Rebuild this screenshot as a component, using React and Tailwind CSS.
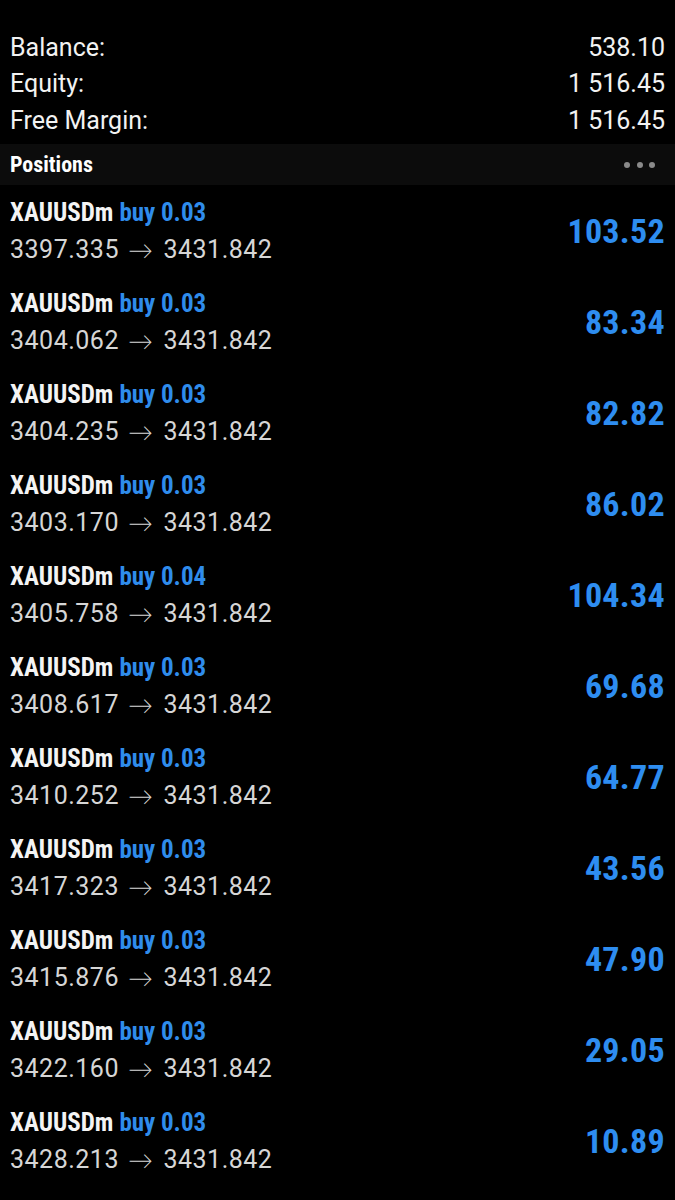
import React from "react";

const rows = [
  ["0.03", "3397.335", "103.52"],
  ["0.03", "3404.062", "83.34"],
  ["0.03", "3404.235", "82.82"],
  ["0.03", "3403.170", "86.02"],
  ["0.04", "3405.758", "104.34"],
  ["0.03", "3408.617", "69.68"],
  ["0.03", "3410.252", "64.77"],
  ["0.03", "3417.323", "43.56"],
  ["0.03", "3415.876", "47.90"],
  ["0.03", "3422.160", "29.05"],
  ["0.03", "3428.213", "10.89"],
];

const cond = "font-['Roboto',sans-serif] font-bold font-stretch-condensed";
const regular = "font-['Roboto',sans-serif]";

export default function App() {
  return (
    <div className="w-[675px] h-[1200px] bg-black overflow-hidden">
      <div className={`${regular} pt-[29px] pb-[5.5px] px-[10px] text-[25px] text-[#f2f2f2]`}>
        {[
          ["Balance:", "538.10"],
          ["Equity:", "1 516.45"],
          ["Free Margin:", "1 516.45"],
        ].map(([k, v]) => (
          <div key={k} className="flex items-center justify-between h-[36.5px] leading-none">
            <span>{k}</span>
            <span>{v}</span>
          </div>
        ))}
      </div>
      <div className="h-[41px] bg-[#0c0c0c] flex items-center justify-between pl-[10px] pr-[20px]">
        <span className={`${cond} text-[22px] text-white leading-none`}>Positions</span>
        <div className="flex gap-[6.5px]">
          <span className="w-[6px] h-[6px] rounded-full bg-[#8a8a8a]" />
          <span className="w-[6px] h-[6px] rounded-full bg-[#8a8a8a]" />
          <span className="w-[6px] h-[6px] rounded-full bg-[#8a8a8a]" />
        </div>
      </div>
      {rows.map(([vol, open, profit], i) => (
        <div key={i} className="h-[91px] flex items-center justify-between px-[10px]">
          <div className="flex flex-col">
            <div className={`${cond} text-[25px] h-[37px] flex items-center leading-none`}>
              <span className="text-[#f4f4f4]">XAUUSDm</span>
              <span className="text-[#2f8ceb] ml-[6px]">buy {vol}</span>
            </div>
            <div className={`${regular} text-[25px] tracking-[0.5px] text-[#d6d6d6] h-[37px] flex items-center leading-none`}>
              <span>{open}</span>
              <span className="font-['Lato',sans-serif] font-light ml-[9px] mr-[10px] text-[25px]">→</span>
              <span>3431.842</span>
            </div>
          </div>
          <span className={`${cond} text-[34px] tracking-[0.3px] text-[#2e8df0] leading-none`}>
            {profit}
          </span>
        </div>
      ))}
    </div>
  );
}
